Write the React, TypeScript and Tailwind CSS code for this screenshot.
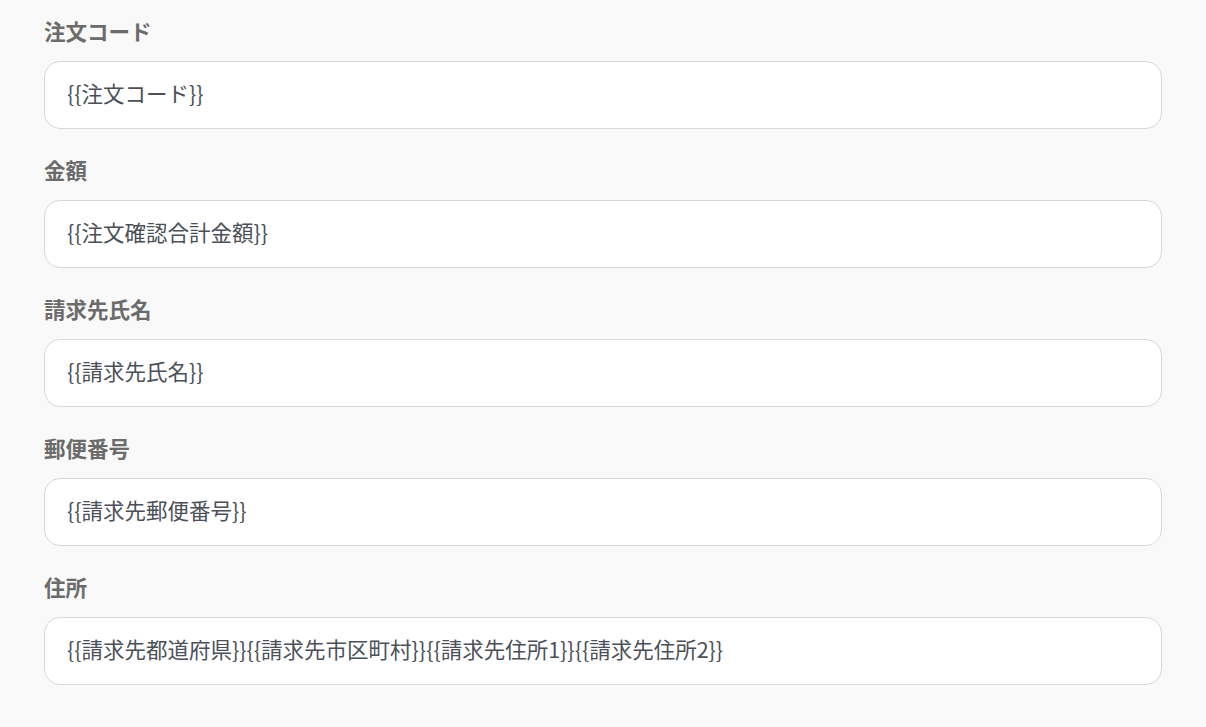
const fields = [
  { label: "注文コード", value: "{{注文コード}}" },
  { label: "金額", value: "{{注文確認合計金額}}" },
  { label: "請求先氏名", value: "{{請求先氏名}}" },
  { label: "郵便番号", value: "{{請求先郵便番号}}" },
  { label: "住所", value: "{{請求先都道府県}}{{請求先市区町村}}{{請求先住所1}}{{請求先住所2}}" },
];

export default function App() {
  return (
    <div
      className="min-h-screen bg-[#f9f9f9] px-[44px] pt-[17px]"
      style={{ fontFamily: '"Noto Sans CJK JP", "Noto Sans", sans-serif' }}
    >
      <div className="flex flex-col gap-[27px]">
        {fields.map((f) => (
          <div key={f.label} className="flex flex-col gap-[16px]">
            <label className="text-[21.5px] leading-[28px] font-bold text-[#6b6b6b]">{f.label}</label>
            <div className="h-[68px] flex items-center rounded-[16px] border border-[#d5d8de] bg-white px-[22px] pb-[3px]">
              <span className="text-[21.5px] text-[#4b5058]">{f.value}</span>
            </div>
          </div>
        ))}
      </div>
    </div>
  );
}
